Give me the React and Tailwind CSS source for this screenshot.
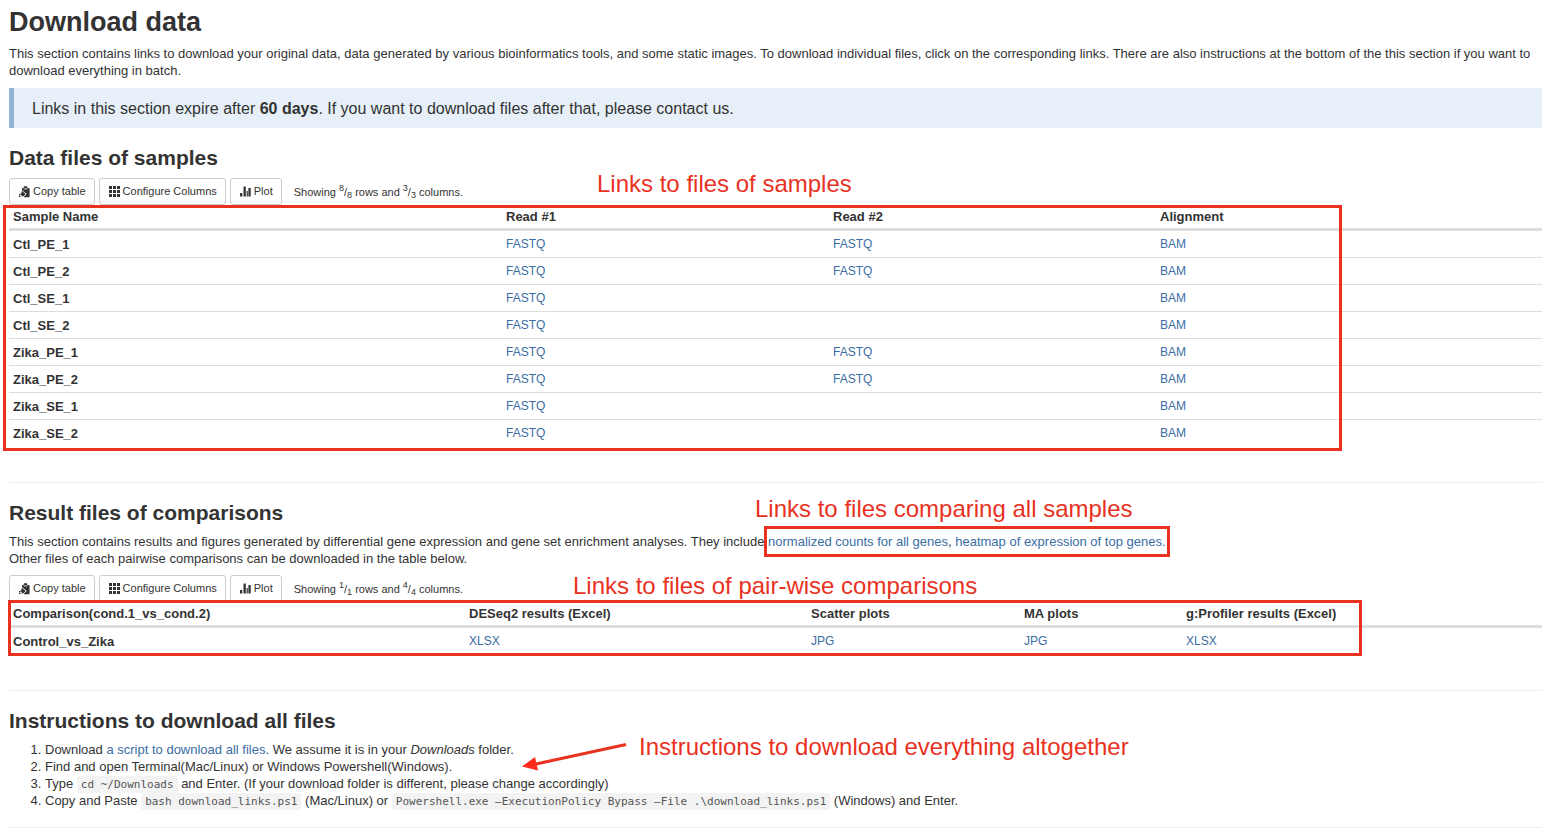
import { useId } from "react";

const samples = [
  ["Ctl_PE_1", true],
  ["Ctl_PE_2", true],
  ["Ctl_SE_1", false],
  ["Ctl_SE_2", false],
  ["Zika_PE_1", true],
  ["Zika_PE_2", true],
  ["Zika_SE_1", false],
  ["Zika_SE_2", false],
];

function CopyIcon() {
  return (
    <svg viewBox="0 0 11 12" className="h-3 w-[11px]" fill="currentColor" aria-hidden="true">
      <path d="M3 2h1.700V1q0-.7.700-.7h2.200q.7 0 .7.700v1H10q.6 0 .6.600v8q0 .6-.6.600H5L3 9z" />
      <path d="M4.500 2.500h4v.8h-4z" fill="#fff" />
      <path d="M1.500 3.500L7.200 8 3.500 11.500" fill="none" stroke="#fff" strokeWidth=".9" />
      <path d="M2.500 5l3.300 3-3 3V9.200H1.500V7.200h1z" />
      <path d="M0 8h1v1.500H0zM0 10h1.500v1H0z" />
    </svg>
  );
}

function GridIcon() {
  return (
    <svg viewBox="0 0 11 11" className="h-[11px] w-[11px]" fill="currentColor" aria-hidden="true">
      <path d="M0 0h3v3H0zM4 0h3v3H4zM8 0h3v3H8zM0 4h3v3H0zM4 4h3v3H4zM8 4h3v3H8zM0 8h3v3H0zM4 8h3v3H4zM8 8h3v3H8z" />
    </svg>
  );
}

function BarsIcon() {
  return (
    <svg viewBox="0 0 11 11" className="h-[11px] w-[11px]" fill="currentColor" aria-hidden="true">
      <path d="M.3 7h1.700q.3 0 .3.300V10.500H0V7.300Q0 7 .3 7zM3.800.5h1.700q.3 0 .3.300v9.700H3.500V.8q0-.3.300-.3zM6.600 5h1.200v5.500H6.600zM8.700 2h1.700q.3 0 .3.300v8.200H8.400V2.300q0-.3.300-.3z" />
    </svg>
  );
}

function ToolButton({ icon, children }) {
  return (
    <button
      type="button"
      className="flex h-[27px] items-center gap-[3px] rounded-[3px] border border-[#ccc] bg-white pr-2 pl-[9px] text-[11px]"
    >
      {icon}
      {children}
    </button>
  );
}

function Toolbar({ rows, columns }) {
  return (
    <div className="flex items-center gap-1">
      <ToolButton icon={<CopyIcon />}>Copy table</ToolButton>
      <ToolButton icon={<GridIcon />}>Configure Columns</ToolButton>
      <ToolButton icon={<BarsIcon />}>Plot</ToolButton>
      <p className="ml-2 text-[11px] leading-4">
        Showing <sup className="text-[9px]">{rows}</sup>/<sub className="text-[9px]">{rows}</sub> rows and{" "}
        <sup className="text-[9px]">{columns}</sup>/<sub className="text-[9px]">{columns}</sub> columns.
      </p>
    </div>
  );
}

function A({ children }) {
  return (
    <a href="#" className="text-[#3a6da3]">
      {children}
    </a>
  );
}

function Th({ className = "", children }) {
  return (
    <th scope="col" className={"border-b-[3px] border-[#ddd] px-1 text-left font-bold " + className}>
      {children}
    </th>
  );
}

function Note({ className, children }) {
  return (
    <span className={"pointer-events-none absolute text-[24px] leading-7 whitespace-nowrap text-[#e8321f] " + className}>
      {children}
    </span>
  );
}

function Frame({ className }) {
  return <span aria-hidden="true" className={"pointer-events-none absolute border-[3px] border-[#e8321f] " + className} />;
}

function Code({ children }) {
  return (
    <code className="rounded-[3px] bg-[#f3f3f3] px-1 py-[2px] font-['DejaVu_Sans_Mono',monospace] text-[11px] leading-none text-[#555]">
      {children}
    </code>
  );
}

const h2 = "text-[21px] leading-6 font-bold";
const table = "w-full table-fixed border-separate border-spacing-0";
const cell = "border-b border-[#ddd] px-1 group-last:border-b-0";

export default function App() {
  const id = useId();
  return (
    <main className="bg-white pt-[6px] pr-[6px] pl-[9px] font-['Liberation_Sans',Arial,sans-serif] text-[13px] leading-[17px] text-[#333]">
      <h1 className="text-[27px] leading-8 font-bold">Download data</h1>
      <p className="mt-[7px]">
        This section contains links to download your original data, data generated by various bioinformatics tools, and
        some static images. To download individual files, click on the corresponding links. There are also instructions
        at the bottom of the this section if you want to download everything in batch.
      </p>
      <div className="mt-[9px] border-l-[5px] border-[#8fb4d6] bg-[#e7f0f8] px-[18px] pt-[11px] pb-[9px] text-[16px] leading-5">
        Links in this section expire after <b>60 days</b>. If you want to download files after that, please contact us.
      </div>

      <section className="relative mt-[18px]" aria-labelledby={id + "a"}>
        <h2 id={id + "a"} className={h2}>Data files of samples</h2>
        <div className="mt-2">
          <Toolbar rows={8} columns={3} />
        </div>
        <table className={table}>
          <thead>
            <tr className="h-[26px]">
              <Th className="w-[493px]">Sample Name</Th>
              <Th className="w-[327px]">Read #1</Th>
              <Th className="w-[327px]">Read #2</Th>
              <Th>Alignment</Th>
            </tr>
          </thead>
          <tbody>
            {samples.map(([name, paired]) => (
              <tr key={name} className="group h-[27px]">
                <th scope="row" className={cell + " text-left font-bold"}>{name}</th>
                <td className={cell + " text-[12px]"}><A>FASTQ</A></td>
                <td className={cell + " text-[12px]"}>{paired && <A>FASTQ</A>}</td>
                <td className={cell + " text-[12px]"}><A>BAM</A></td>
              </tr>
            ))}
          </tbody>
        </table>
        <Frame className="top-[59px] bottom-[-4px] left-[-6px] w-[1339px]" />
        <Note className="top-6 left-[588px]">Links to files of samples</Note>
      </section>

      <hr className="mt-[35px] border-[#eee]" />

      <section className="relative mt-[18px]" aria-labelledby={id + "b"}>
        <h2 id={id + "b"} className={h2}>Result files of comparisons</h2>
        <p className="mt-2">
          This section contains results and figures generated by differential gene expression and gene set enrichment
          analyses. They include{" "}
          <span className="relative">
            <A>normalized counts for all genes</A>, <A>heatmap of expression of top genes.</A>
            <Frame className="-inset-x-1 -top-2 -bottom-2" />
          </span>
          <br />
          Other files of each pairwise comparisons can be downloaded in the table below.
        </p>
        <div className="mt-2">
          <Toolbar rows={1} columns={4} />
        </div>
        <table className={table}>
          <thead>
            <tr className="h-[26px]">
              <Th className="w-[456px]">Comparison(cond.1_vs_cond.2)</Th>
              <Th className="w-[342px]">DESeq2 results (Excel)</Th>
              <Th className="w-[213px]">Scatter plots</Th>
              <Th className="w-[162px]">MA plots</Th>
              <Th>g:Profiler results (Excel)</Th>
            </tr>
          </thead>
          <tbody>
            <tr className="group h-[26px]">
              <th scope="row" className={cell + " text-left font-bold"}>Control_vs_Zika</th>
              {["XLSX", "JPG", "JPG", "XLSX"].map((label, i) => (
                <td key={i} className={cell + " text-[12px]"}><A>{label}</A></td>
              ))}
            </tr>
          </tbody>
        </table>
        <Frame className="top-[99px] bottom-[-2px] left-[-1px] w-[1354px]" />
        <Note className="top-[-6px] left-[746px]">Links to files comparing all samples</Note>
        <Note className="top-[71px] left-[564px]">Links to files of pair-wise comparisons</Note>
      </section>

      <hr className="mt-9 border-[#eee]" />

      <section className="relative mt-[18px]" aria-labelledby={id + "c"}>
        <h2 id={id + "c"} className={h2}>Instructions to download all files</h2>
        <ol className="mt-2 list-decimal pl-9">
          <li>Download <A>a script to download all files</A>. We assume it is in your <i>Downloads</i> folder.</li>
          <li>Find and open Terminal(Mac/Linux) or Windows Powershell(Windows).</li>
          <li>Type <Code>cd ~/Downloads</Code> and Enter. (If your download folder is different, please change accordingly)</li>
          <li>
            Copy and Paste <Code>bash download_links.ps1</Code> (Mac/Linux) or{" "}
            <Code>Powershell.exe –ExecutionPolicy Bypass –File .\download_links.ps1</Code> (Windows) and Enter.
          </li>
        </ol>
        <Note className="top-6 left-[630px]">Instructions to download everything altogether</Note>
        <svg aria-hidden="true" viewBox="0 0 106 30" className="pointer-events-none absolute top-[34px] left-[513px] h-[30px] w-[106px]">
          <path d="M104 1.500L14 21" stroke="#e8321f" strokeWidth="3" fill="none" />
          <path d="M0 23.500L13 14l3 13.500z" fill="#fb2a1c" />
        </svg>
      </section>

      <hr className="mt-[18px] border-[#eee]" />
    </main>
  );
}
